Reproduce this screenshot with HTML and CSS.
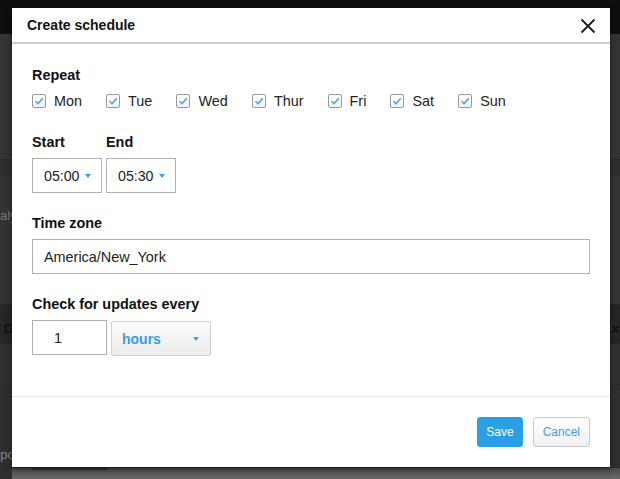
FILE: index.html
```html
<!DOCTYPE html>
<html>
<head>
<meta charset="utf-8">
<link rel="stylesheet" href="styles.css">
</head>
<body>
<div class="page">
  <div class="topbar"></div>
  <div class="bg-row r1"></div>
  <div class="bg-row r2"></div>
  <div class="bg-row r3"><span class="bg-text t-aly">Analytics</span></div>
  <div class="bg-row r4"><span class="bg-text bold t-d">D</span><span class="bg-text bold t-xe">Executed</span></div>
  <div class="bg-row r5"></div>
  <div class="bg-row r6"><span class="bg-text t-po">Export</span></div>
  <div class="bg-bottom"><div class="bg-btn"></div></div>
</div>

<div class="modal">
  <div class="modal-header">
    <span class="modal-title">Create schedule</span>
    <svg class="close" width="16" height="16" viewBox="0 0 16 16"><path d="M1.5 1.5 L14.5 14.5 M14.5 1.5 L1.5 14.5" stroke="#222" stroke-width="2" fill="none"/></svg>
  </div>
  <div class="modal-body">
    <div class="label">Repeat</div>
    <div class="days">
      <label class="day"><span class="cb"><svg width="12" height="12" viewBox="0 0 12 12"><path d="M2.5 6.2 L5 8.7 L9.8 3.2" stroke="#4a9fd8" stroke-width="1.5" fill="none"/></svg></span>Mon</label>
      <label class="day"><span class="cb"><svg width="12" height="12" viewBox="0 0 12 12"><path d="M2.5 6.2 L5 8.7 L9.8 3.2" stroke="#4a9fd8" stroke-width="1.5" fill="none"/></svg></span>Tue</label>
      <label class="day"><span class="cb"><svg width="12" height="12" viewBox="0 0 12 12"><path d="M2.5 6.2 L5 8.7 L9.8 3.2" stroke="#4a9fd8" stroke-width="1.5" fill="none"/></svg></span>Wed</label>
      <label class="day"><span class="cb"><svg width="12" height="12" viewBox="0 0 12 12"><path d="M2.5 6.2 L5 8.7 L9.8 3.2" stroke="#4a9fd8" stroke-width="1.5" fill="none"/></svg></span>Thur</label>
      <label class="day"><span class="cb"><svg width="12" height="12" viewBox="0 0 12 12"><path d="M2.5 6.2 L5 8.7 L9.8 3.2" stroke="#4a9fd8" stroke-width="1.5" fill="none"/></svg></span>Fri</label>
      <label class="day"><span class="cb"><svg width="12" height="12" viewBox="0 0 12 12"><path d="M2.5 6.2 L5 8.7 L9.8 3.2" stroke="#4a9fd8" stroke-width="1.5" fill="none"/></svg></span>Sat</label>
      <label class="day"><span class="cb"><svg width="12" height="12" viewBox="0 0 12 12"><path d="M2.5 6.2 L5 8.7 L9.8 3.2" stroke="#4a9fd8" stroke-width="1.5" fill="none"/></svg></span>Sun</label>
    </div>
    <div class="times">
      <div class="time-col">
        <div class="label">Start</div>
        <div class="select">05:00<span class="caret"></span></div>
      </div>
      <div class="time-col">
        <div class="label">End</div>
        <div class="select">05:30<span class="caret"></span></div>
      </div>
    </div>
    <div class="label">Time zone</div>
    <div class="text-input">America/New_York</div>
    <div class="label">Check for updates every</div>
    <div class="updates">
      <div class="num-input">1</div>
      <div class="unit-select">hours<span class="caret"></span></div>
    </div>
  </div>
  <div class="modal-footer">
    <button class="btn btn-primary">Save</button>
    <button class="btn btn-default">Cancel</button>
  </div>
</div>
</body>
</html>
```
FILE: styles.css
```css
html, body {
  margin: 0;
  padding: 0;
}
body {
  width: 620px;
  height: 479px;
  overflow: hidden;
  position: relative;
  background: #2f2f2f;
  font-family: "Liberation Sans", Arial, sans-serif;
  font-size: 14px;
  color: #111;
}
.page {
  display: flex;
  flex-direction: column;
  height: 479px;
}
.topbar {
  height: 34px;
  background: #0e0e0e;
  flex: none;
}
.bg-row {
  flex: none;
  position: relative;
  overflow: hidden;
  border-bottom: 1px solid #2a2a2a;
  color: #777;
  font-size: 13px;
}
.r1 { height: 125px; background: #343434; }
.r2 { height: 15px; background: #2e2e2e; }
.r3 { height: 128px; background: #333333; }
.r4 { height: 38px; background: #262626; }
.r5 { height: 40px; background: #303030; }
.r6 { height: 82px; background: #2f2f2f; }
.bg-text {
  position: absolute;
  white-space: nowrap;
}
.bold { font-weight: bold; color: #111; }
.t-aly { left: -16px; top: 32px; }
.t-d { left: 4px; top: 16px; }
.t-xe { left: 603px; top: 16px; }
.t-po { left: -15px; top: 62px; color: #888; }
.bg-bottom {
  flex: 1;
  margin-left: 12px;
  background: linear-gradient(#4a4a4a, #6a6a6a);
}
.bg-btn {
  margin-left: 20px;
  width: 75px;
  height: 2px;
  background: #333;
}

.modal {
  position: absolute;
  left: 12px;
  top: 8px;
  width: 598px;
  height: 459px;
  background: #fff;
  box-shadow: 0 2px 6px rgba(0, 0, 0, 0.5);
  display: flex;
  flex-direction: column;
}
.modal-header {
  height: 34px;
  flex: none;
  border-bottom: 2px solid #cfcfcf;
  display: flex;
  align-items: center;
  justify-content: space-between;
  padding: 0 14px 0 15px;
}
.modal-title {
  font-weight: bold;
  font-size: 14px;
  color: #111;
}
.close {
  display: block;
  margin-top: 1px;
}
.modal-body {
  flex: 1;
  padding: 21px 20px 0 20px;
}
.label {
  font-weight: bold;
  font-size: 14.4px;
  line-height: 20px;
  margin-bottom: 6px;
  color: #111;
}
.days {
  display: flex;
  height: 20px;
  align-items: center;
  margin-bottom: 21px;
}
.day {
  display: flex;
  align-items: center;
  margin-right: 24.1px;
  font-size: 14.4px;
  color: #222;
}
.cb {
  width: 12px;
  height: 12px;
  border: 1px solid #9a9a9a;
  border-radius: 2px;
  background: linear-gradient(#fff, #f2f2f2);
  margin-right: 8px;
  display: flex;
}
.times {
  display: flex;
  gap: 4px;
  margin-bottom: 20px;
}
.select {
  width: 70px;
  height: 35px;
  box-sizing: border-box;
  border: 1px solid #b0b0b0;
  padding-left: 11px;
  display: flex;
  align-items: center;
  font-size: 14.2px;
  color: #222;
}
.caret {
  width: 0;
  height: 0;
  border-left: 3.5px solid transparent;
  border-right: 3.5px solid transparent;
  border-top: 4px solid #3d9ee0;
  margin-left: 5px;
}
.text-input {
  height: 35px;
  box-sizing: border-box;
  border: 1px solid #b0b0b0;
  padding-left: 11px;
  display: flex;
  align-items: center;
  font-size: 14.4px;
  color: #222;
  margin-bottom: 20px;
}
.updates {
  display: flex;
  align-items: flex-start;
  gap: 4px;
}
.num-input {
  width: 75px;
  height: 35px;
  box-sizing: border-box;
  border: 1px solid #b0b0b0;
  padding-left: 21px;
  display: flex;
  align-items: center;
  font-size: 14.4px;
  color: #222;
}
.unit-select {
  width: 100px;
  height: 35px;
  margin-top: 1px;
  box-sizing: border-box;
  border: 1px solid #cfcfcf;
  border-radius: 2px;
  background: linear-gradient(#fbfbfb, #ececec);
  padding: 0 11px 0 10px;
  display: flex;
  align-items: center;
  justify-content: space-between;
  font-weight: bold;
  font-size: 14px;
  color: #3b9ddd;
}
.unit-select .caret {
  margin-left: 0;
}
.modal-footer {
  flex: none;
  height: 70px;
  border-top: 1px solid #e2e2e2;
  display: flex;
  align-items: center;
  justify-content: flex-end;
  gap: 10px;
  padding-right: 20px;
}
.btn {
  height: 30px;
  padding: 0 9px;
  font-family: "Liberation Sans", Arial, sans-serif;
  font-size: 12px;
  border-radius: 3px;
  margin: 0;
}
.btn-primary {
  background: #2b9fe6;
  border: 1px solid #2b9fe6;
  color: #fff;
  padding: 0 8px;
}
.btn-default {
  background: linear-gradient(#ffffff, #f0f0f0);
  border: 1px solid #c8c8c8;
  color: #4a9bd4;
}
```
